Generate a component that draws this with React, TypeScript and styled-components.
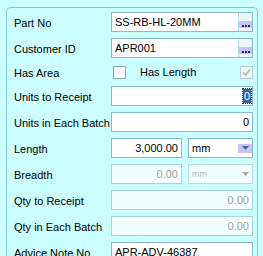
import React from 'react';
import styled, { createGlobalStyle } from 'styled-components';

const GlobalStyle = createGlobalStyle`
  html, body {
    margin: 0;
    padding: 0;
    background: #ccffff;
    overflow: hidden;
  }
  body {
    font-family: 'Liberation Sans', Arial, sans-serif;
    font-size: 11px;
    color: #000;
  }
`;

const Page = styled.div`
  width: 263px;
  height: 256px;
  padding: 7px 5px 0 6px;
  box-sizing: border-box;
`;

const Panel = styled.div`
  border: 1px solid #86c5da;
  border-bottom: none;
  border-radius: 5px 5px 0 0;
  padding: 4px 4px 0 7px;
  height: 260px;
  display: grid;
  grid-template-columns: 97px 142px;
  grid-auto-rows: min-content;
  row-gap: 6px;
  box-sizing: border-box;
`;

const Label = styled.div`
  height: 20px;
  display: flex;
  align-items: center;
  white-space: nowrap;
  padding-top: 1px;
  box-sizing: border-box;
`;

const Field = styled.div`
  display: flex;
  height: 20px;
`;

const TextBox = styled.div<{ $align?: 'left' | 'right'; $disabled?: boolean; $width?: number }>`
  height: 20px;
  box-sizing: border-box;
  border: 1px solid ${p => (p.$disabled ? '#a9d3df' : '#88bccb')};
  background: ${p => (p.$disabled ? '#f2ffff' : '#fff')};
  color: ${p => (p.$disabled ? '#a3a3a3' : '#000')};
  padding: 0 3px;
  display: flex;
  align-items: center;
  justify-content: ${p => (p.$align === 'right' ? 'flex-end' : 'flex-start')};
  ${p => (p.$width ? `width: ${p.$width}px;` : 'flex: 1;')}
  white-space: nowrap;
  overflow: hidden;
`;

const LookupBox = styled(TextBox)`
  padding-right: 0;
  justify-content: space-between;
`;

const LookupButton = styled.div`
  width: 14px;
  height: 18px;
  border-left: 1px solid #b9d9e2;
  background: linear-gradient(#e9f7fb 0 45%, #c6c4f3 45% 85%, #e9f7fb 85%);
  display: flex;
  align-items: flex-end;
  justify-content: center;
  gap: 1px;
  padding-bottom: 4px;
  box-sizing: border-box;
`;

const Dot = styled.i`
  width: 2px;
  height: 2px;
  background: #232c6e;
`;

const Selected = styled.span`
  background: #2f62a8;
  color: #fff;
  padding: 0 1px;
  line-height: 14px;
  margin-right: -2px;
  outline: 1px dotted #1b3d70;
`;

const Combo = styled.div<{ $disabled?: boolean }>`
  margin-left: 6px;
  width: 65px;
  height: 20px;
  box-sizing: border-box;
  border: 1px solid ${p => (p.$disabled ? '#bfdbe3' : '#88bccb')};
  background: ${p => (p.$disabled ? '#f2ffff' : '#fff')};
  color: ${p => (p.$disabled ? '#b0b0b0' : '#000')};
  display: flex;
  align-items: center;
  padding-left: 3px;
`;

const ComboText = styled.span<{ $small?: boolean }>`
  flex: 1;
  font-size: ${p => (p.$small ? '9px' : '11px')};
`;

const ComboArrow = styled.div<{ $disabled?: boolean }>`
  width: 14px;
  height: 18px;
  display: flex;
  align-items: center;
  justify-content: center;
  background: ${p =>
    p.$disabled ? 'transparent' : 'linear-gradient(#fff 0 28%, #c6c4f3 28% 78%, #fff 78%)'};
`;

const CheckRow = styled.div`
  grid-column: 2;
  height: 20px;
  display: flex;
  align-items: center;
  justify-content: space-between;
  padding-left: 2px;
  margin-top: -2px;
  margin-bottom: -2px;
`;

const CheckGroup = styled.div`
  display: flex;
  align-items: center;
  gap: 14px;
`;

const CheckBox = styled.div<{ $disabled?: boolean }>`
  width: 13px;
  height: 13px;
  box-sizing: border-box;
  border: 1px solid ${p => (p.$disabled ? '#b4cfd6' : '#8ea9b3')};
  background: ${p => (p.$disabled ? '#eef7f8' : '#fff')};
  display: flex;
  align-items: center;
  justify-content: center;
`;

const CheckLabel = styled(Label)`
  grid-column: 1;
  margin-top: -2px;
  margin-bottom: -2px;
`;

const Arrow = ({ color }: { color: string }) => (
  <svg width="7" height="4" viewBox="0 0 7 4">
    <path d="M0 0H7L3.5 4Z" fill={color} />
  </svg>
);

const Dots = () => (
  <LookupButton>
    <Dot />
    <Dot />
    <Dot />
  </LookupButton>
);

export default function App() {
  return (
    <>
      <GlobalStyle />
      <Page>
        <Panel>
          <Label>Part No</Label>
          <Field>
            <LookupBox>
              <span>SS-RB-HL-20MM</span>
              <Dots />
            </LookupBox>
          </Field>

          <Label>Customer ID</Label>
          <Field>
            <LookupBox>
              <span>APR001</span>
              <Dots />
            </LookupBox>
          </Field>

          <CheckLabel>Has Area</CheckLabel>
          <CheckRow>
            <CheckGroup>
              <CheckBox />
              <span>Has Length</span>
            </CheckGroup>
            <CheckBox $disabled>
              <svg width="9" height="9" viewBox="0 0 9 9">
                <path d="M1 4.5L3.5 7L8 1.5" stroke="#a9b9bf" strokeWidth="1.6" fill="none" />
              </svg>
            </CheckBox>
          </CheckRow>

          <Label>Units to Receipt</Label>
          <Field>
            <TextBox $align="right">
              <Selected>0</Selected>
            </TextBox>
          </Field>

          <Label>Units in Each Batch</Label>
          <Field>
            <TextBox $align="right">0</TextBox>
          </Field>

          <Label>Length</Label>
          <Field>
            <TextBox $align="right" $width={71}>3,000.00</TextBox>
            <Combo>
              <ComboText>mm</ComboText>
              <ComboArrow>
                <Arrow color="#56648c" />
              </ComboArrow>
            </Combo>
          </Field>

          <Label>Breadth</Label>
          <Field>
            <TextBox $align="right" $width={71} $disabled>0.00</TextBox>
            <Combo $disabled>
              <ComboText $small>mm</ComboText>
              <ComboArrow $disabled>
                <Arrow color="#a8a8a8" />
              </ComboArrow>
            </Combo>
          </Field>

          <Label>Qty to Receipt</Label>
          <Field>
            <TextBox $align="right" $disabled>0.00</TextBox>
          </Field>

          <Label>Qty in Each Batch</Label>
          <Field>
            <TextBox $align="right" $disabled>0.00</TextBox>
          </Field>

          <Label>Advice Note No</Label>
          <Field>
            <TextBox>APR-ADV-46387</TextBox>
          </Field>
        </Panel>
      </Page>
    </>
  );
}
